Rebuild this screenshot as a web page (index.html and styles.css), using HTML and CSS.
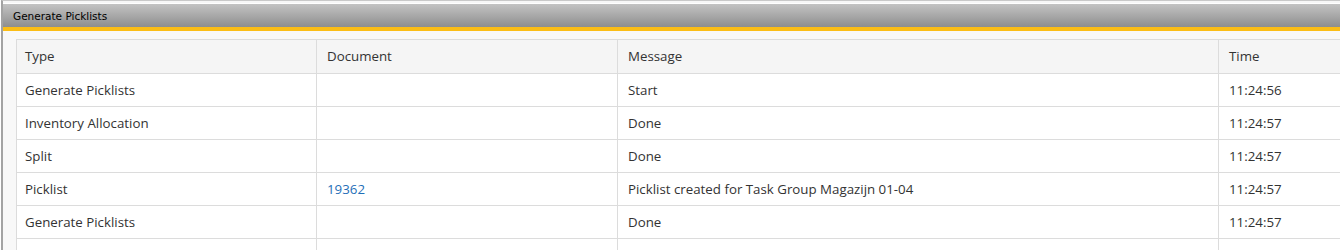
FILE: index.html
```html
<!DOCTYPE html>
<html>
<head>
<meta charset="utf-8">
<link rel="stylesheet" href="styles.css">
</head>
<body>
<div class="window">
  <div class="titlebar">Generate Picklists</div>
  <div class="accent"></div>
  <div class="content">
    <table class="grid">
      <colgroup>
        <col class="c1"><col class="c2"><col class="c3"><col class="c4">
      </colgroup>
      <thead>
        <tr><th>Type</th><th>Document</th><th>Message</th><th>Time</th></tr>
      </thead>
      <tbody>
        <tr><td>Generate Picklists</td><td></td><td>Start</td><td>11:24:56</td></tr>
        <tr><td>Inventory Allocation</td><td></td><td>Done</td><td>11:24:57</td></tr>
        <tr><td>Split</td><td></td><td>Done</td><td>11:24:57</td></tr>
        <tr><td>Picklist</td><td><a class="doc" href="#">19362</a></td><td>Picklist created for Task Group Magazijn 01-04</td><td>11:24:57</td></tr>
        <tr><td>Generate Picklists</td><td></td><td>Done</td><td>11:24:57</td></tr>
        <tr><td></td><td></td><td></td><td></td></tr>
      </tbody>
    </table>
  </div>
</div>
</body>
</html>
```
FILE: styles.css
```css
html, body {
  margin: 0;
  padding: 0;
  background: #ffffff;
  height: 250px;
  overflow: hidden;
}
.window {
  margin-left: 1px;
  border-left: 2px solid #a3a3a3;
  border-top: 1px solid #c9c9c9;
  height: 249px;
  display: flex;
  flex-direction: column;
  background: #f7f7f7;
}
.titlebar {
  height: 23px;
  margin-top: 2px;
  padding-left: 10px;
  background: linear-gradient(#c3c3c3, #8e8e8e);
  font-family: "DejaVu Sans", sans-serif;
  font-size: 10.5px;
  line-height: 25px;
  color: #000;
  border-top: 1px solid #fff;
}
.accent {
  height: 4px;
  background: #fbbd16;
}
.content {
  flex: 1;
  padding: 8px 0 0 13px;
  overflow: hidden;
  background: #f8f8f8;
}
.grid {
  border-collapse: collapse;
  table-layout: fixed;
  width: 1404px;
  font-family: "Open Sans", sans-serif;
  font-size: 13.3px;
  color: #333;
}
.c1 { width: 300px; }
.c2 { width: 301px; }
.c3 { width: 601px; }
.c4 { width: 202px; }
.grid th, .grid td {
  border: 1px solid #dcdcdc;
  text-align: left;
  font-weight: normal;
  padding: 0 0 0 10px;
  height: 32px;
  line-height: 16px;
  white-space: nowrap;
}
.grid th:first-child, .grid td:first-child {
  padding-left: 8px;
}
.grid th {
  background: #f5f5f5;
  height: 32px;
  padding-bottom: 1px;
}
.grid td {
  background: #fff;
}
.doc {
  color: #1f6fb8;
  text-decoration: none;
}
```
